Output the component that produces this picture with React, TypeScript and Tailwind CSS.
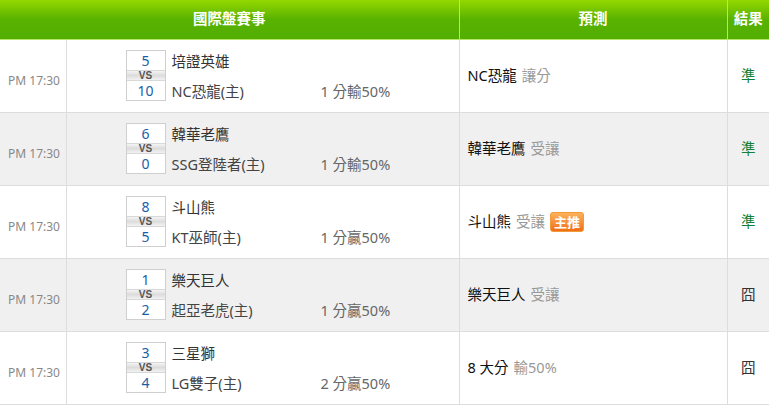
type Match = {
  away: string;
  home: string;
  awayScore: number;
  homeScore: number;
  odds: string;
  pick: string;
  pickNote: string;
  hot?: boolean;
  hit: boolean;
};

const matches: Match[] = [
  { away: "培證英雄", home: "NC恐龍(主)", awayScore: 5, homeScore: 10, odds: "1 分輸50%", pick: "NC恐龍", pickNote: "讓分", hit: true },
  { away: "韓華老鷹", home: "SSG登陸者(主)", awayScore: 6, homeScore: 0, odds: "1 分輸50%", pick: "韓華老鷹", pickNote: "受讓", hit: true },
  { away: "斗山熊", home: "KT巫師(主)", awayScore: 8, homeScore: 5, odds: "1 分贏50%", pick: "斗山熊", pickNote: "受讓", hot: true, hit: true },
  { away: "樂天巨人", home: "起亞老虎(主)", awayScore: 1, homeScore: 2, odds: "1 分贏50%", pick: "樂天巨人", pickNote: "受讓", hit: false },
  { away: "三星獅", home: "LG雙子(主)", awayScore: 3, homeScore: 4, odds: "2 分贏50%", pick: "8 大分", pickNote: "輸50%", hit: false },
];

const ScoreBox = ({ a, b }: { a: number; b: number }) => (
  <div className="flex w-[40px] flex-col border border-[#cfcfcf] bg-white">
    <div className="flex h-[19px] items-center justify-center text-[14px] text-[#1b5ea6]">{a}</div>
    <div className="flex h-[11px] items-center justify-center border-y border-[#d8d8d8] bg-gradient-to-b from-[#f4f4f4] via-[#dcdcdc] to-[#f2f2f2] font-['Liberation_Sans',sans-serif] text-[10px] font-bold leading-none text-[#555]">
      VS
    </div>
    <div className="flex h-[19px] items-center justify-center text-[14px] text-[#1b5ea6]">{b}</div>
  </div>
);

export default function App() {
  return (
    <div className="w-[771px] bg-white font-['Noto_Sans','Noto_Sans_CJK_TC',sans-serif]">
      <table className="w-[769px] table-fixed border-collapse">
        <colgroup>
          <col className="w-[66px]" />
          <col className="w-[393px]" />
          <col className="w-[268px]" />
          <col className="w-[42px]" />
        </colgroup>
        <thead>
          <tr className="h-[39px] bg-gradient-to-b from-[#93d800] via-[#58b200] to-[#52ae00] text-[14.5px] font-bold text-white">
            <th colSpan={2} className="border-b border-r border-[#b5e86a] font-bold">
              國際盤賽事
            </th>
            <th className="border-b border-r border-[#b5e86a] font-bold">預測</th>
            <th className="border-b border-[#b5e86a] font-bold">結果</th>
          </tr>
        </thead>
        <tbody>
          {matches.map((m, i) => (
            <tr key={i} className={`h-[73px] border-b border-[#dddddd] ${i % 2 === 1 ? "bg-[#f0f0f0]" : "bg-white"}`}>
              <td className="border-r border-[#dddddd] pl-[8px] pt-[10px] text-[12px] text-[#888]">PM 17:30</td>
              <td className="border-r border-[#dddddd] pl-[59px]">
                <div className="flex items-center gap-[6px]">
                  <ScoreBox a={m.awayScore} b={m.homeScore} />
                  <div className="flex h-[52px] flex-1 flex-col justify-between text-[14.5px] leading-[22px]">
                    <div className="text-[#333]">{m.away}</div>
                    <div className="flex text-[#444]">
                      <span className="w-[149px]">{m.home}</span>
                      <span className="text-[#666]">{m.odds}</span>
                    </div>
                  </div>
                </div>
              </td>
              <td className="border-r border-[#dddddd] pl-[8px] text-[14.5px]">
                <div className="flex items-center gap-[5px]">
                  <span className="text-[#111]">{m.pick}</span>
                  <span className="text-[#999]">{m.pickNote}</span>
                  {m.hot && (
                    <span className="rounded-[3px] border border-[#f29a3a] bg-gradient-to-b from-[#fbb25a] to-[#ef6e10] px-[3px] text-[13px] leading-[18px] font-bold text-white">
                      主推
                    </span>
                  )}
                </div>
              </td>
              <td className={`text-center text-[14.5px] ${m.hit ? "text-[#13803a]" : "text-[#333]"}`}>
                {m.hit ? "準" : "囧"}
              </td>
            </tr>
          ))}
        </tbody>
      </table>
    </div>
  );
}
